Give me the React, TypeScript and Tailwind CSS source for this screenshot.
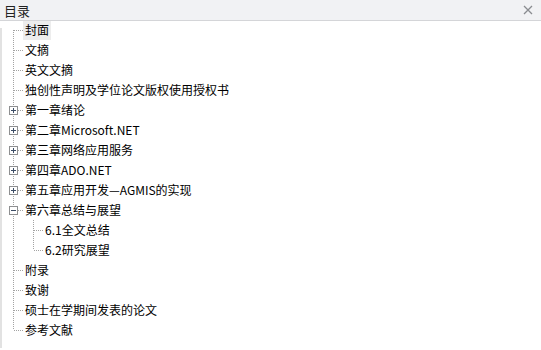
type Node = {
  label: string;
  level: 0 | 1;
  box?: "plus" | "minus";
  selected?: boolean;
  last?: boolean;
  first?: boolean;
};

const nodes: Node[] = [
  { label: "封面", level: 0, selected: true, first: true },
  { label: "文摘", level: 0 },
  { label: "英文文摘", level: 0 },
  { label: "独创性声明及学位论文版权使用授权书", level: 0 },
  { label: "第一章绪论", level: 0, box: "plus" },
  { label: "第二章Microsoft.NET", level: 0, box: "plus" },
  { label: "第三章网络应用服务", level: 0, box: "plus" },
  { label: "第四章ADO.NET", level: 0, box: "plus" },
  { label: "第五章应用开发—AGMIS的实现", level: 0, box: "plus" },
  { label: "第六章总结与展望", level: 0, box: "minus" },
  { label: "6.1全文总结", level: 1 },
  { label: "6.2研究展望", level: 1, last: true },
  { label: "附录", level: 0 },
  { label: "致谢", level: 0 },
  { label: "硕士在学期间发表的论文", level: 0 },
  { label: "参考文献", level: 0, last: true },
];

const DOT = "#a3a3a3";

// tree connector lines for one row
const Gutter = ({ node }: { node: Node }) => {
  const width = node.level === 0 ? 21 : 41;
  const rootTop = node.first ? 10 : 0;
  const rootBottom = node.level === 0 && node.last ? 10 : 20;
  return (
    <svg width={width} height={20} className="shrink-0 block">
      <line x1={11.5} y1={rootTop} x2={11.5} y2={rootBottom} stroke={DOT} strokeDasharray="1 1" />
      {node.level === 0 && (
        <line x1={node.box ? 16 : 12} y1={10.5} x2={21} y2={10.5} stroke={DOT} strokeDasharray="1 1" />
      )}
      {node.level === 1 && (
        <>
          <line x1={31.5} y1={0} x2={31.5} y2={node.last ? 10 : 20} stroke={DOT} strokeDasharray="1 1" />
          <line x1={32} y1={10.5} x2={41} y2={10.5} stroke={DOT} strokeDasharray="1 1" />
        </>
      )}
      {node.box && (
        <g>
          <rect x={7.5} y={6.5} width={8} height={8} fill="#ffffff" stroke="#8e8f91" />
          <line x1={9} y1={10.5} x2={14} y2={10.5} stroke="#3d4d66" />
          {node.box === "plus" && <line x1={11.5} y1={8} x2={11.5} y2={13} stroke="#3d4d66" />}
        </g>
      )}
    </svg>
  );
};

const App = () => {
  return (
    <div
      className="w-[541px] h-[350px] bg-white overflow-hidden text-black"
      style={{ fontFamily: '"Noto Sans CJK SC", "Noto Sans", sans-serif' }}
    >
      <div className="h-[21px] flex items-center justify-between bg-[#f1f2f4] border-b border-[#d4d5d8] pl-[4px] pr-[4px]">
        <span className="text-[13px] leading-none text-[#222]">目录</span>
        <svg width={12} height={12} className="block mr-[3px]">
          <path d="M2 2 L10 10 M10 2 L2 10" stroke="#8a8c90" strokeWidth={1.3} />
        </svg>
      </div>

      <div className="flex">
        <div className="w-[2px] mt-[7px] h-[320px] bg-[#e2e2e2] shrink-0" />
        <ul className="flex flex-col -mt-px">
          {nodes.map((node) => (
            <li key={node.label} className="flex h-5 items-center">
              <Gutter node={node} />
              <span
                className={`px-[2px] h-[19px] flex items-center text-[12px] leading-none whitespace-nowrap ${
                  node.selected ? "bg-[#ededed]" : ""
                }`}
              >
                {node.label}
              </span>
            </li>
          ))}
        </ul>
      </div>
    </div>
  );
};

export default App;
